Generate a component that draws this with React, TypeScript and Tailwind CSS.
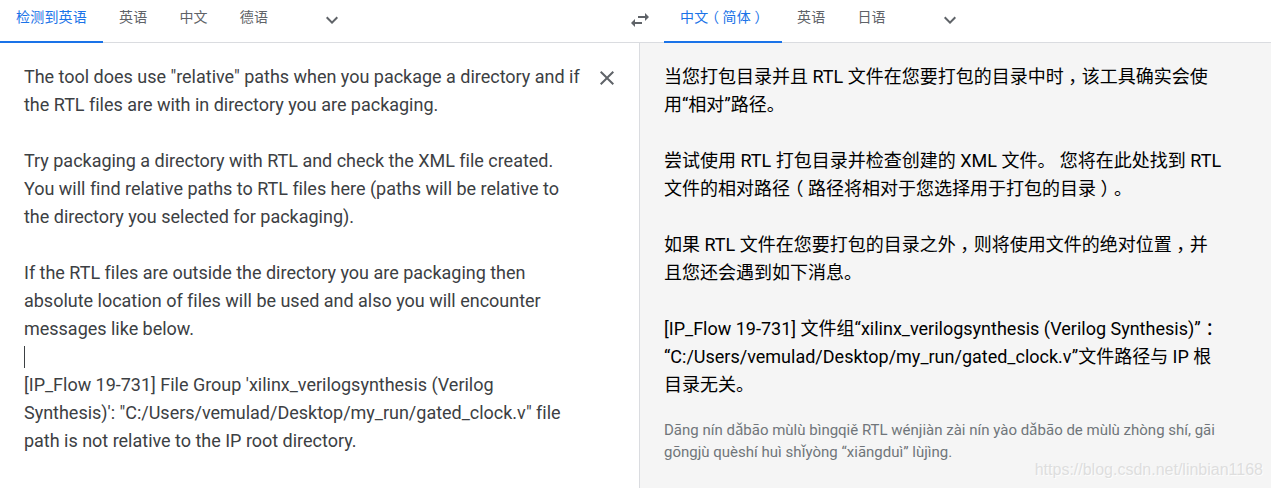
import React from "react";

const CJK = "font-['Roboto','Noto_Sans_CJK_SC',sans-serif]";

function Tab({ children, active, w }: { children: React.ReactNode; active?: boolean; w?: string }) {
  return (
    <div className={`h-[43px] px-4 pt-[8px] text-[14px] tracking-[0.2px] leading-[18px] border-b-2 whitespace-nowrap ${active ? "text-[#1a73e8] border-[#1a73e8]" : "text-[#5f6368] border-transparent"} ${w ?? ""}`}>
      {children}
    </div>
  );
}

function Chevron() {
  return (
    <svg width="24" height="24" viewBox="0 0 24 24" fill="#5f6368" className="-mt-[3px]">
      <path d="M16.59 8.59 12 13.17 7.41 8.59 6 10l6 6 6-6z" />
    </svg>
  );
}

// Full-width punctuation, centred in its em box.
function P({ children }: { children: React.ReactNode }) {
  return <span className="[font-feature-settings:'halt'] px-[4.5px]">{children}</span>;
}
function TP({ children }: { children: React.ReactNode }) {
  return <span className="[font-feature-settings:'halt'] px-[3.5px]">{children}</span>;
}

export default function App() {
  return (
    <div className={`w-[1271px] h-[488px] overflow-hidden bg-white flex flex-col ${CJK}`}>
      <div className="h-[43px] flex border-b border-[#dadce0] shrink-0">
        <div className="w-[639px] flex items-start">
          <Tab active w="w-[103px]">检测到英语</Tab>
          <Tab>英语</Tab>
          <Tab>中文</Tab>
          <Tab>德语</Tab>
          <div className="ml-[36px] h-[42px] flex items-center"><Chevron /></div>
        </div>
        <div className="w-[25px] flex items-center justify-center h-[42px]">
          <svg width="24" height="24" viewBox="0 0 24 24" fill="#5f6368" className="-ml-[23px] -mt-[3px] shrink-0">
            <path d="M6.99 11 3 15l3.99 4v-3H14v-2H6.99v-3zM21 9l-3.99-4v3H10v2h7.01v3L21 9z" />
          </svg>
        </div>
        <div className="flex-1 flex items-start">
          <Tab active w="w-[118px]">中文<TP>（</TP>简体<TP>）</TP></Tab>
          <div className="-ml-px flex items-start">
            <Tab>英语</Tab>
            <Tab>日语</Tab>
          </div>
          <div className="ml-[36px] h-[42px] flex items-center"><Chevron /></div>
        </div>
      </div>
      <div className="flex-1 flex min-h-0">
        <div className="w-[640px] shrink-0 border-r border-[#dadce0] flex items-start pl-6 pt-5">
          <div className="w-[560px] text-[18px] leading-[28px] tracking-[-0.015px] text-[#3c4043] whitespace-nowrap">
            The tool does use "relative" paths when you package a directory and if<br />
            the RTL files are with in directory you are packaging.<br />
            <br />
            Try packaging a directory with RTL and check the XML file created.<br />
            You will find relative paths to RTL files here (paths will be relative to<br />
            the directory you selected for packaging).<br />
            <br />
            If the RTL files are outside the directory you are packaging then<br />
            absolute location of files will be used and also you will encounter<br />
            messages like below.<br />
            <span className="inline-block w-px h-[22px] bg-[#3c4043] align-[-5px]" /><br />
            [IP_Flow 19-731] File Group 'xilinx_verilogsynthesis (Verilog<br />
            Synthesis)': "C:/Users/vemulad/Desktop/my_run/gated_clock.v" file<br />
            path is not relative to the IP root directory.
          </div>
          <svg width="24" height="24" viewBox="0 0 24 24" fill="#5f6368" className="ml-[11px] mt-[3px] shrink-0">
            <path d="M19 6.41 17.59 5 12 10.59 6.41 5 5 6.41 10.59 12 5 17.59 6.41 19 12 13.41 17.59 19 19 17.59 13.41 12z" />
          </svg>
        </div>
        <div className="flex-1 bg-[#f5f5f5] pl-6 pt-5 relative">
          <div className="text-[18px] leading-[28px] text-black whitespace-nowrap">
            当您打包目录并且 RTL 文件在您要打包的目录中时<P>，</P>该工具确实会使<br />
            用“相对”路径。<br />
            <br />
            尝试使用 RTL 打包目录并检查创建的 XML 文件。 您将在此处找到 RTL<br />
            文件的相对路径<P>（</P>路径将相对于您选择用于打包的目录<P>）</P>。<br />
            <br />
            如果 RTL 文件在您要打包的目录之外<P>，</P>则将使用文件的绝对位置<P>，</P>并<br />
            且您还会遇到如下消息。<br />
            <br />
            [IP_Flow 19-731] 文件组“xilinx_verilogsynthesis (Verilog Synthesis)”<P>：</P><br />
            “C:/Users/vemulad/Desktop/my_run/gated_clock.v”文件路径与 IP 根<br />
            目录无关。
          </div>
          <div className="mt-5 text-[15px] leading-[22px] text-[#70757a] whitespace-nowrap">
            Dāng nín dǎbāo mùlù bìngqiě RTL wénjiàn zài nín yào dǎbāo de mùlù zhòng shí, gāi<br />
            gōngjù quèshí huì shǐyòng “xiāngduì” lùjìng.
          </div>
          <div className="absolute right-[8px] bottom-[8px] font-['Liberation_Sans',sans-serif] text-[16px] leading-[20px] text-[#dedede] [text-shadow:1px_1px_0_rgba(255,255,255,0.8)]">
            https://blog.csdn.net/linbian1168
          </div>
        </div>
      </div>
    </div>
  );
}
